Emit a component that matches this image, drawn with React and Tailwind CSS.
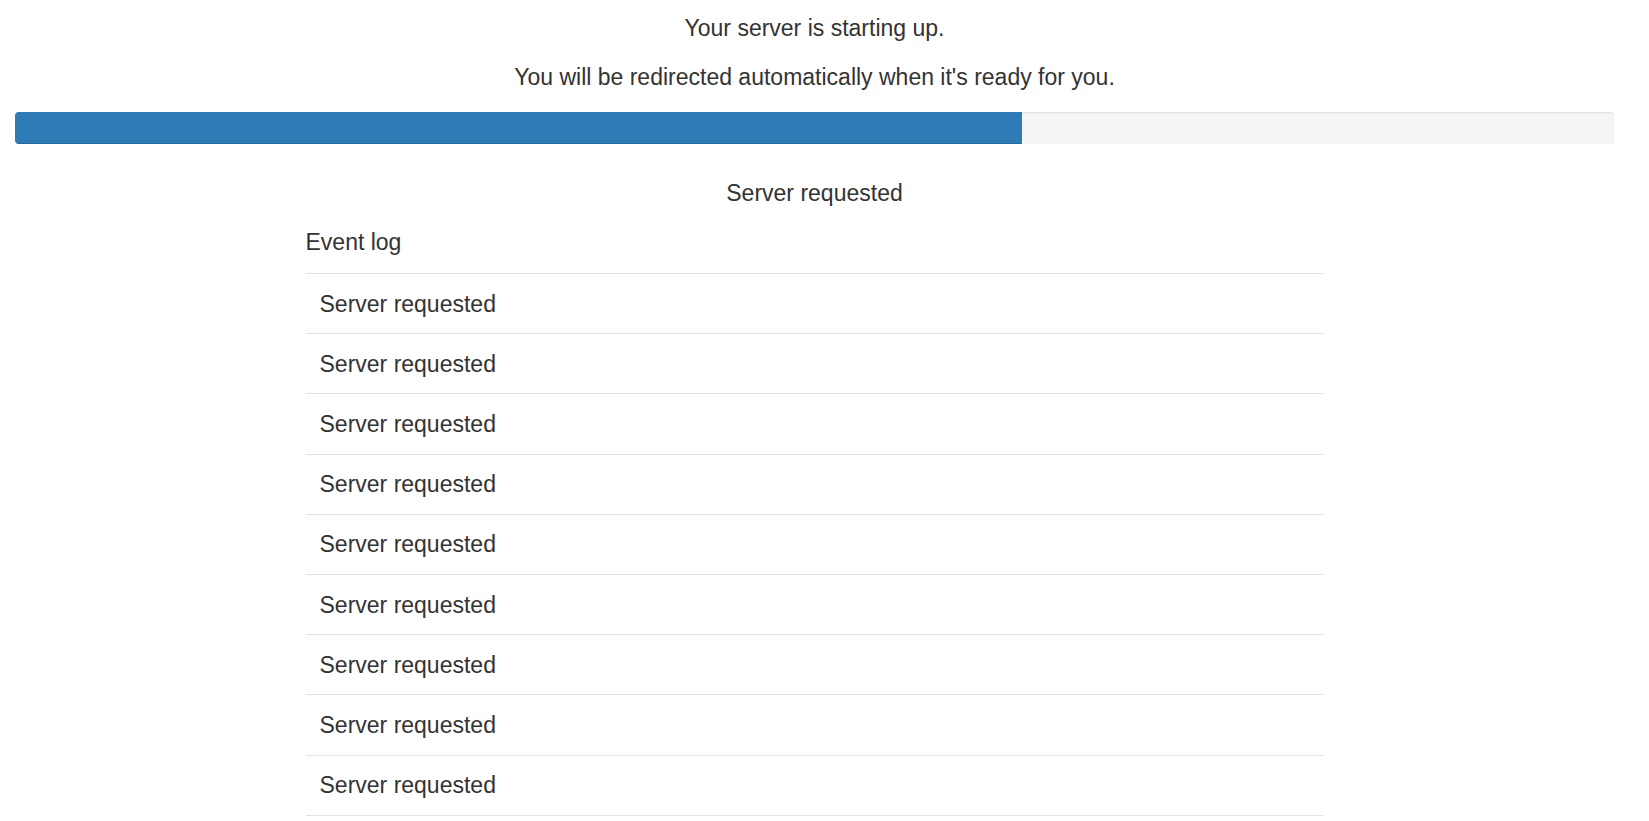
const events = Array.from({ length: 10 }, () => "Server requested");

function ProgressBar({ percent }) {
    return (
        <div className="h-[32px] w-full rounded-[4px] bg-[#f5f5f5] shadow-[inset_0_1px_2px_rgba(0,0,0,0.1)] overflow-hidden">
            <div
                className="h-full bg-[#2e7bb6] shadow-[inset_0_-1px_0_rgba(0,0,0,0.15)]"
                style={{ width: `${percent}%` }}
            />
        </div>
    );
}

export default function App() {
    return (
        <div className="min-h-screen bg-white text-[#333] font-['Liberation_Sans',Arial,sans-serif] text-[23px] leading-[32px] pl-[15px] pr-[35px]">
            <div className="pt-[12px] text-center">
                <p>Your server is starting up.</p>
                <p className="mt-[17px]">
                    You will be redirected automatically when it's ready for you.
                </p>
            </div>

            <div className="mt-[19px]">
                <ProgressBar percent={63} />
            </div>

            <p className="mt-[33px] text-center">Server requested</p>

            <div className="mx-auto w-[1018px] mt-[17px]">
                <p className="pb-[15px]">Event log</p>
                <div>
                    {events.map((msg, i) => (
                        <div
                            key={i}
                            className="h-[60.2px] flex items-center pl-[14px] border-t border-[#e3e3e3]"
                        >
                            {msg}
                        </div>
                    ))}
                </div>
            </div>
        </div>
    );
}
